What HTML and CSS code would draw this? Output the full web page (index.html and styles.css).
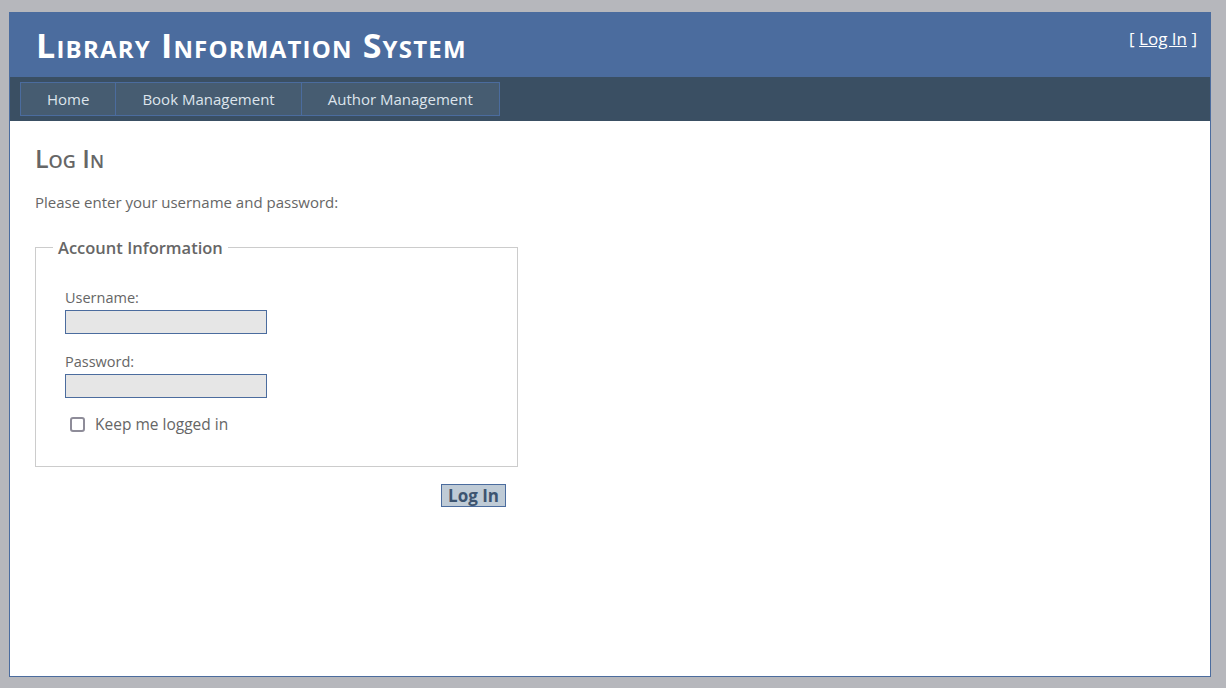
FILE: index.html
```html
<!DOCTYPE html>
<html>
<head>
<meta charset="utf-8">
<title>Log In</title>
<link rel="stylesheet" href="styles.css">
</head>
<body>
<div class="page">
  <header class="header">
    <h1 class="title">Library Information System</h1>
    <div class="login-display">[ <a href="#" class="login-link">Log In</a> ]</div>
  </header>
  <nav class="menu-bar">
    <ul class="menu">
      <li class="menu-item"><a href="#">Home</a></li>
      <li class="menu-item"><a href="#">Book Management</a></li>
      <li class="menu-item"><a href="#">Author Management</a></li>
    </ul>
  </nav>
  <main class="main">
    <h2 class="page-heading">Log In</h2>
    <p class="intro">Please enter your username and password:</p>
    <div class="account-info">
      <fieldset class="login-fieldset">
        <legend class="login-legend">Account Information</legend>
        <div class="fields">
          <div class="field">
            <label class="field-label" for="user">Username:</label>
            <input class="text-entry" id="user" type="text">
          </div>
          <div class="field">
            <label class="field-label" for="pass">Password:</label>
            <input class="text-entry" id="pass" type="password">
          </div>
          <div class="field check-field">
            <input class="check" id="keep" type="checkbox">
            <label class="check-label" for="keep">Keep me logged in</label>
          </div>
        </div>
      </fieldset>
      <div class="submit-row">
        <button class="submit-button" type="button">Log In</button>
      </div>
    </div>
  </main>
</div>
</body>
</html>
```

FILE: styles.css
```css
html, body {
  margin: 0;
  padding: 0;
  height: 100%;
}
body {
  background: #b6b7bc;
  font-family: "Open Sans", "Noto Sans", sans-serif;
  color: #696969;
}
.page {
  box-sizing: border-box;
  margin: 12px 15px 0 9px;
  height: calc(100% - 23px);
  background: #fff;
  border: 1px solid #4b6c9e;
  display: flex;
  flex-direction: column;
}
.header {
  background: #4b6c9e;
  height: 64px;
  display: flex;
  justify-content: space-between;
  align-items: flex-start;
}
.title {
  margin: 0;
  padding: 12px 0 0 26px;
  font-size: 34px;
  font-weight: 700;
  font-variant: small-caps;
  color: #fff;
  line-height: 40px;
  letter-spacing: 1.2px;
}
.login-display {
  padding: 14px 13px 0 0;
  font-size: 17px;
  line-height: 24px;
  color: #fff;
}
.login-link {
  color: #fff;
  text-decoration: underline;
}
.menu-bar {
  background: #3a4f63;
  height: 44px;
  box-sizing: border-box;
  padding: 5px 0 0 10px;
}
.menu {
  list-style: none;
  margin: 0;
  padding: 0;
  display: flex;
}
.menu-item a {
  display: block;
  box-sizing: border-box;
  height: 34px;
  line-height: 32px;
  padding: 0 26px;
  background: #465c71;
  border: 1px solid #4b6c9e;
  color: #dde4ec;
  font-size: 15px;
  text-decoration: none;
}
.menu-item + .menu-item a {
  margin-left: -1px;
}
.main {
  padding: 0 25px;
}
.page-heading {
  margin: 22px 0 0;
  font-size: 25px;
  font-weight: 600;
  font-variant: small-caps;
  color: #666;
  line-height: 30px;
}
.intro {
  margin: 19px 0 0;
  font-size: 15px;
  line-height: 20px;
  color: #666;
}
.account-info {
  width: 483px;
}
.login-fieldset {
  margin: 24px 0 0;
  padding: 0 0 32px 0;
  border: 1px solid #ccc;
}
.login-legend {
  padding: 0 5px;
  margin-left: 17px;
  font-size: 16.5px;
  font-weight: 600;
  color: #666;
}
.fields {
  padding: 27px 0 0 29px;
}
.field {
  display: flex;
  flex-direction: column;
  align-items: flex-start;
}
.field + .field {
  margin-top: 16px;
}
.field-label {
  font-size: 14.5px;
  line-height: 24px;
  color: #666;
}
.text-entry {
  box-sizing: border-box;
  width: 202px;
  height: 24px;
  margin: 0;
  background: #e6e6e6;
  border: 1px solid #4b6c9e;
  padding: 0 3px;
}
.check-field {
  flex-direction: row;
  align-items: center;
  padding-left: 5px;
}
.field + .check-field {
  margin-top: 16px;
}
.check {
  appearance: none;
  -webkit-appearance: none;
  box-sizing: border-box;
  width: 15px;
  height: 15px;
  margin: 0 10px 0 0;
  border: 2px solid #8e8c99;
  border-radius: 3px;
  background: #fff;
}
.check-label {
  font-size: 15.5px;
  line-height: 20px;
  color: #666;
}
.submit-row {
  display: flex;
  justify-content: flex-end;
  padding: 17px 12px 0 0;
}
.submit-button {
  box-sizing: border-box;
  height: 23px;
  padding: 0 6px;
  background: #bfcbd6;
  border: 1px solid #4b6c9e;
  color: #3d5470;
  font-family: "Open Sans", "Noto Sans", sans-serif;
  font-size: 17px;
  font-weight: 700;
  line-height: 20px;
}
```
